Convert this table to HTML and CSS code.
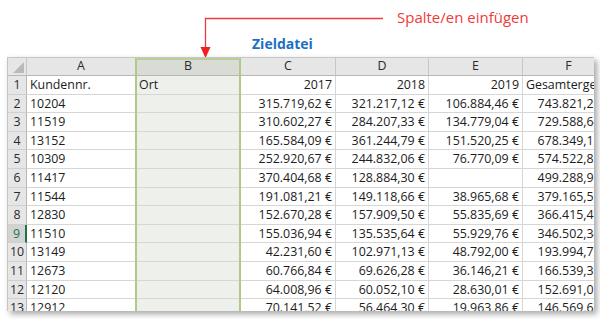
FILE: index.html
```html
<!DOCTYPE html>
<html lang="de">
<head>
<meta charset="utf-8">
<link rel="stylesheet" href="styles.css">
</head>
<body>
<div class="page">
  <div class="callout">
    <svg class="callout-lines" width="600" height="60" viewBox="0 0 600 60">
      <path d="M383 18.5 H205.5 V48" fill="none" stroke="#f23a3a" stroke-width="1.3"/>
      <polygon points="200.5,47 210.5,47 205.5,58" fill="#f21f1f"/>
    </svg>
    <span class="callout-label">Spalte/en einfügen</span>
  </div>
  <div class="title">Zieldatei</div>
  <div class="sheet">
    <div class="grid">
      <div class="hd corner"><span class="tri"></span></div>
      <div class="hd">A</div>
      <div class="hd colb">B</div>
      <div class="hd">C</div>
      <div class="hd">D</div>
      <div class="hd">E</div>
      <div class="hd">F</div>

      <div class="rn">1</div><div class="c">Kundennr.</div><div class="c b">Ort</div><div class="c r">2017</div><div class="c r">2018</div><div class="c r">2019</div><div class="c">Gesamtergebnis</div>
      <div class="rn">2</div><div class="c">10204</div><div class="c b"></div><div class="c r">315.719,62 €</div><div class="c r">321.217,12 €</div><div class="c r">106.884,46 €</div><div class="c r">743.821,20 €</div>
      <div class="rn">3</div><div class="c">11519</div><div class="c b"></div><div class="c r">310.602,27 €</div><div class="c r">284.207,33 €</div><div class="c r">134.779,04 €</div><div class="c r">729.588,64 €</div>
      <div class="rn">4</div><div class="c">13152</div><div class="c b"></div><div class="c r">165.584,09 €</div><div class="c r">361.244,79 €</div><div class="c r">151.520,25 €</div><div class="c r">678.349,13 €</div>
      <div class="rn">5</div><div class="c">10309</div><div class="c b"></div><div class="c r">252.920,67 €</div><div class="c r">244.832,06 €</div><div class="c r">76.770,09 €</div><div class="c r">574.522,82 €</div>
      <div class="rn">6</div><div class="c">11417</div><div class="c b"></div><div class="c r">370.404,68 €</div><div class="c r">128.884,30 €</div><div class="c r"></div><div class="c r">499.288,98 €</div>
      <div class="rn">7</div><div class="c">11544</div><div class="c b"></div><div class="c r">191.081,21 €</div><div class="c r">149.118,66 €</div><div class="c r">38.965,68 €</div><div class="c r">379.165,55 €</div>
      <div class="rn">8</div><div class="c">12830</div><div class="c b"></div><div class="c r">152.670,28 €</div><div class="c r">157.909,50 €</div><div class="c r">55.835,69 €</div><div class="c r">366.415,47 €</div>
      <div class="rn active">9</div><div class="c">11510</div><div class="c b"></div><div class="c r">155.036,94 €</div><div class="c r">135.535,64 €</div><div class="c r">55.929,76 €</div><div class="c r">346.502,34 €</div>
      <div class="rn">10</div><div class="c">13149</div><div class="c b"></div><div class="c r">42.231,60 €</div><div class="c r">102.971,13 €</div><div class="c r">48.792,00 €</div><div class="c r">193.994,73 €</div>
      <div class="rn">11</div><div class="c">12673</div><div class="c b"></div><div class="c r">60.766,84 €</div><div class="c r">69.626,28 €</div><div class="c r">36.146,21 €</div><div class="c r">166.539,33 €</div>
      <div class="rn">12</div><div class="c">12120</div><div class="c b"></div><div class="c r">64.008,96 €</div><div class="c r">60.052,10 €</div><div class="c r">28.630,01 €</div><div class="c r">152.691,07 €</div>
      <div class="rn">13</div><div class="c">12912</div><div class="c b"></div><div class="c r">70.141,52 €</div><div class="c r">56.464,30 €</div><div class="c r">19.963,86 €</div><div class="c r">146.569,68 €</div>
    </div>
    <div class="colb-frame"></div>
  </div>
</div>
</body>
</html>
```
FILE: styles.css
```css
html, body {
  margin: 0;
  padding: 0;
  background: #ffffff;
}

.page {
  position: relative;
  width: 600px;
  height: 319px;
  overflow: hidden;
  font-family: "Open Sans", "Liberation Sans", sans-serif;
}

.callout {
  position: absolute;
  left: 0;
  top: 0;
  width: 600px;
  height: 60px;
}

.callout-lines {
  position: absolute;
  left: 0;
  top: 0;
}

.callout-label {
  position: absolute;
  left: 397px;
  top: 7px;
  font-size: 15px;
  line-height: 20px;
  color: #f23a3a;
  white-space: nowrap;
}

.title {
  padding-top: 35px;
  padding-left: 252px;
  height: 18px;
  font-size: 14px;
  line-height: 18px;
  font-weight: 700;
  color: #1c6fc2;
}

.sheet {
  position: relative;
  margin-top: 4px;
  margin-left: 7px;
  width: 587px;
  height: 254px;
  overflow: hidden;
  box-shadow: 3px 3px 6px rgba(0, 0, 0, 0.35);
  background: #fff;
}

.grid {
  display: grid;
  grid-template-columns: 20px 109px 105px 95px 93px 94px 92px;
  grid-template-rows: 19px repeat(13, 18.6px);
  font-size: 12.4px;
  color: #1c1c1c;
}

.hd {
  box-sizing: border-box;
  background: #e6e6e6;
  border-top: 1px solid #c6c6c6;
  border-right: 1px solid #c6c6c6;
  border-bottom: 1px solid #b8b8b8;
  display: flex;
  align-items: center;
  justify-content: center;
  color: #2a2a2a;
  line-height: 1;
}

.hd.corner {
  position: relative;
  border-left: 1px solid #c6c6c6;
}

.tri {
  position: absolute;
  right: 2px;
  bottom: 2px;
  width: 0;
  height: 0;
  border-left: 11px solid transparent;
  border-bottom: 11px solid #b9b9b9;
}

.hd.colb {
  background: #d9dcd4;
}

.rn {
  box-sizing: border-box;
  background: #e6e6e6;
  border-left: 1px solid #c6c6c6;
  border-right: 1px solid #b8b8b8;
  border-bottom: 1px solid #d0d0d0;
  display: flex;
  align-items: center;
  justify-content: center;
  color: #2a2a2a;
  line-height: 1;
  padding-top: 1px;
}

.rn.active {
  background: #d3d3d3;
  color: #217346;
  border-right: 2px solid #217346;
}

.c {
  box-sizing: border-box;
  border-right: 1px solid #d6d6d6;
  border-bottom: 1px solid #d6d6d6;
  padding: 1px 3px 0 3px;
  display: flex;
  align-items: center;
  white-space: nowrap;
  overflow: hidden;
  line-height: 1;
}

.c.r {
  justify-content: flex-end;
}

.c.b {
  background: #eef0eb;
}

.colb-frame {
  position: absolute;
  left: 128px;
  top: 1px;
  width: 106px;
  height: 260px;
  box-sizing: border-box;
  border-left: 2px solid #afc98a;
  border-right: 2px solid #afc98a;
  border-top: 2px solid #b9cf98;
  pointer-events: none;
}
```
